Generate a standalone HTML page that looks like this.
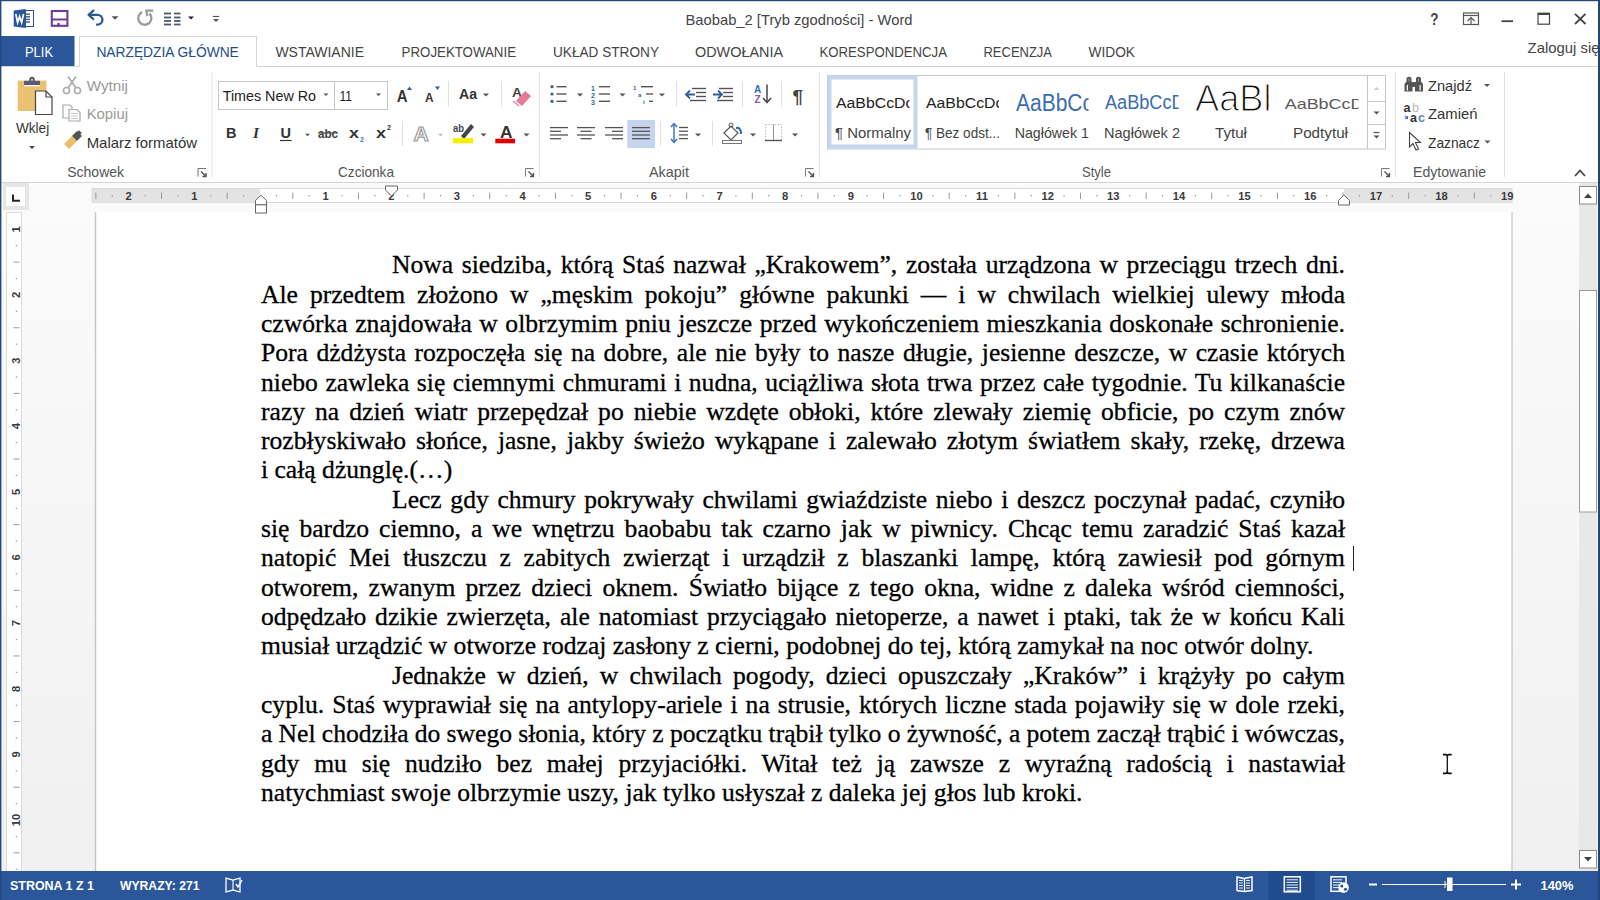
<!DOCTYPE html>
<html><head><meta charset="utf-8"><title>Word</title><style>
html,body{margin:0;padding:0;}
body{width:1600px;height:900px;overflow:hidden;position:relative;background:#fff;font-family:"Liberation Sans",sans-serif;}
.ln{position:absolute;height:0;font-family:"Liberation Serif",serif;font-size:25.6px;color:#000;-webkit-text-stroke:0.3px #000;white-space:nowrap;line-height:0;}

</style></head>
<body>
<svg width="1600" height="900" style="position:absolute;left:0;top:0" font-family='"Liberation Sans", sans-serif'><rect x="0" y="0" width="1600" height="900" fill="#ffffff" />
<defs><linearGradient id="docbg" x1="0" y1="0" x2="0" y2="1"><stop offset="0" stop-color="#fbfbfb"/><stop offset="1" stop-color="#f0f0f0"/></linearGradient></defs>
<rect x="0" y="183" width="1600" height="688" fill="url(#docbg)" />
<rect x="95" y="212" width="1417" height="659" fill="#ffffff" />
<line x1="95.5" y1="212" x2="95.5" y2="871" stroke="#c6c6c6" stroke-width="1.5" />
<line x1="1512" y1="212" x2="1512" y2="871" stroke="#c6c6c6" stroke-width="1.3" />
<text x="685.5" y="24.8" font-size="15" fill="#444" font-weight="normal" textLength="227.0" lengthAdjust="spacingAndGlyphs" >Baobab_2 [Tryb zgodności] - Word</text>
<rect x="25.5" y="10.5" width="8" height="16" fill="#ffffff" stroke="#2e4d86" stroke-width="1"/>
<line x1="25.5" y1="14.2" x2="30" y2="14.2" stroke="#3b5a90" stroke-width="1.4" />
<line x1="25.5" y1="16.8" x2="30" y2="16.8" stroke="#3b5a90" stroke-width="1.4" />
<line x1="25.5" y1="19.4" x2="30" y2="19.4" stroke="#3b5a90" stroke-width="1.4" />
<line x1="25.5" y1="22" x2="30" y2="22" stroke="#3b5a90" stroke-width="1.4" />
<path d="M13.7,10.5 L25.7,9 L25.7,28 L13.7,26.5 Z" fill="#2b579a" stroke="none" stroke-width="1" />
<path d="M15.8,14 L17.6,22.5 L19.6,16.5 L21.6,22.5 L23.6,14" fill="none" stroke="#ffffff" stroke-width="1.7" stroke-linejoin="miter"/>
<rect x="51.8" y="11" width="15.6" height="14.8" fill="none" stroke="#6e3b9e" stroke-width="2.1"/>
<line x1="52" y1="19.5" x2="67" y2="19.5" stroke="#6e3b9e" stroke-width="2" />
<rect x="57.3" y="23" width="2.4" height="3.5" fill="#6e3b9e" />
<path d="M89,14.8 L97.5,14.8 A4.95,4.95 0 0 1 97.5,24.7 L97,24.7" fill="none" stroke="#2b5a92" stroke-width="2.3" stroke-linecap="round"/>
<path d="M93.3,10.6 L88.6,14.8 L93.3,19" fill="none" stroke="#2b5a92" stroke-width="2.3" stroke-linecap="round" stroke-linejoin="round"/>
<path d="M111.5,16.25 L118.5,16.25 L115,19.75 Z" fill="#555" stroke="none" stroke-width="1" />
<path d="M142.2,12.1 A6.6,6.6 0 1 0 149.3,13.3" fill="none" stroke="#9a9a9a" stroke-width="2.3" />
<path d="M153.2,10.6 L146.3,10.6 L147.3,16.2" fill="none" stroke="#9a9a9a" stroke-width="2.2" />
<line x1="164" y1="13.5" x2="171" y2="13.5" stroke="#4a5a70" stroke-width="1.8" />
<line x1="174" y1="13.5" x2="180.5" y2="13.5" stroke="#4a5a70" stroke-width="1.8" />
<line x1="164" y1="17.5" x2="171" y2="17.5" stroke="#4a5a70" stroke-width="1.8" />
<line x1="174" y1="17.5" x2="180.5" y2="17.5" stroke="#4a5a70" stroke-width="1.8" />
<line x1="164" y1="21" x2="171" y2="21" stroke="#4a5a70" stroke-width="1.8" />
<line x1="174" y1="21" x2="180.5" y2="21" stroke="#4a5a70" stroke-width="1.8" />
<line x1="164" y1="24.5" x2="171" y2="24.5" stroke="#4a5a70" stroke-width="1.8" />
<line x1="174" y1="24.5" x2="180.5" y2="24.5" stroke="#4a5a70" stroke-width="1.8" />
<path d="M188.0,16.5 L194.0,16.5 L191,19.5 Z" fill="#222" stroke="none" stroke-width="1" />
<line x1="213" y1="16.5" x2="219" y2="16.5" stroke="#555" stroke-width="1.2" />
<path d="M213.0,19.0 L219.0,19.0 L216,22.0 Z" fill="#555" stroke="none" stroke-width="1" />
<text x="1430.3" y="24.6" font-size="16.5" fill="#444" font-weight="bold" textLength="8.2" lengthAdjust="spacingAndGlyphs" >?</text>
<rect x="1463.5" y="13" width="15" height="11.5" fill="none" stroke="#555" stroke-width="1.2"/>
<line x1="1463.5" y1="15.5" x2="1478.5" y2="15.5" stroke="#555" stroke-width="1.2" />
<path d="M1467.5,21 L1471,17.5 L1474.5,21" fill="none" stroke="#555" stroke-width="1.2" />
<line x1="1471" y1="17.5" x2="1471" y2="24.5" stroke="#555" stroke-width="1.2" />
<line x1="1501.5" y1="21.2" x2="1513" y2="21.2" stroke="#444" stroke-width="1.8" />
<rect x="1538" y="13.2" width="11.5" height="11" fill="none" stroke="#444" stroke-width="1.2"/>
<line x1="1538" y1="14" x2="1549.5" y2="14" stroke="#444" stroke-width="2" />
<line x1="1575" y1="13.8" x2="1585.5" y2="24" stroke="#444" stroke-width="1.8" />
<line x1="1585.5" y1="13.8" x2="1575" y2="24" stroke="#444" stroke-width="1.8" />
<rect x="0" y="36" width="74.5" height="30.5" fill="#2b579a" />
<text x="25" y="57.1" font-size="15" fill="#ffffff" font-weight="normal" textLength="28.0" lengthAdjust="spacingAndGlyphs" >PLIK</text>
<path d="M79.5,66.5 L79.5,36.5 L256.5,36.5 L256.5,66.5" fill="none" stroke="#d4d4d4" stroke-width="1" />
<text x="96.4" y="57.1" font-size="15" fill="#234d8c" font-weight="normal" textLength="142.4" lengthAdjust="spacingAndGlyphs" >NARZĘDZIA GŁÓWNE</text>
<text x="275.4" y="57.1" font-size="15" fill="#444" font-weight="normal" textLength="88.6" lengthAdjust="spacingAndGlyphs" >WSTAWIANIE</text>
<text x="401.6" y="57.1" font-size="15" fill="#444" font-weight="normal" textLength="114.4" lengthAdjust="spacingAndGlyphs" >PROJEKTOWANIE</text>
<text x="553" y="57.1" font-size="15" fill="#444" font-weight="normal" textLength="106.0" lengthAdjust="spacingAndGlyphs" >UKŁAD STRONY</text>
<text x="695" y="57.1" font-size="15" fill="#444" font-weight="normal" textLength="88.0" lengthAdjust="spacingAndGlyphs" >ODWOŁANIA</text>
<text x="819.5" y="57.1" font-size="15" fill="#444" font-weight="normal" textLength="127.5" lengthAdjust="spacingAndGlyphs" >KORESPONDENCJA</text>
<text x="983.5" y="57.1" font-size="15" fill="#444" font-weight="normal" textLength="68.5" lengthAdjust="spacingAndGlyphs" >RECENZJA</text>
<text x="1088.5" y="57.1" font-size="15" fill="#444" font-weight="normal" textLength="46.5" lengthAdjust="spacingAndGlyphs" >WIDOK</text>
<text x="1527.6" y="53" font-size="15" fill="#444" font-weight="normal" textLength="71.9" lengthAdjust="spacingAndGlyphs" >Zaloguj się</text>
<line x1="0" y1="66.5" x2="79.5" y2="66.5" stroke="#d4d4d4" stroke-width="1" />
<line x1="256.5" y1="66.5" x2="1600" y2="66.5" stroke="#d4d4d4" stroke-width="1" />
<line x1="0" y1="182.5" x2="1600" y2="182.5" stroke="#d4d4d4" stroke-width="1" />
<line x1="212" y1="72" x2="212" y2="177" stroke="#e1e1e1" stroke-width="1" />
<line x1="539.5" y1="72" x2="539.5" y2="177" stroke="#e1e1e1" stroke-width="1" />
<line x1="819.5" y1="72" x2="819.5" y2="177" stroke="#e1e1e1" stroke-width="1" />
<line x1="1395.5" y1="72" x2="1395.5" y2="177" stroke="#e1e1e1" stroke-width="1" />
<line x1="1504.5" y1="72" x2="1504.5" y2="177" stroke="#e1e1e1" stroke-width="1" />
<text x="67.3" y="176.7" font-size="15" fill="#555" font-weight="normal" textLength="56.7" lengthAdjust="spacingAndGlyphs" >Schowek</text>
<text x="338" y="176.7" font-size="15" fill="#555" font-weight="normal" textLength="56.0" lengthAdjust="spacingAndGlyphs" >Czcionka</text>
<text x="649" y="176.7" font-size="15" fill="#555" font-weight="normal" textLength="40.0" lengthAdjust="spacingAndGlyphs" >Akapit</text>
<text x="1082" y="176.7" font-size="15" fill="#555" font-weight="normal" textLength="29.0" lengthAdjust="spacingAndGlyphs" >Style</text>
<text x="1413" y="177" font-size="15" fill="#555" font-weight="normal" textLength="73.0" lengthAdjust="spacingAndGlyphs" >Edytowanie</text>
<path d="M198,176.5 L198,168.5 L206,168.5" fill="none" stroke="#777" stroke-width="1" />
<path d="M201,171.5 L206,176.5 M206,173.0 L206,176.5 L202.5,176.5" fill="none" stroke="#555" stroke-width="1.4" />
<path d="M525.5,176.5 L525.5,168.5 L533.5,168.5" fill="none" stroke="#777" stroke-width="1" />
<path d="M528.5,171.5 L533.5,176.5 M533.5,173.0 L533.5,176.5 L530.0,176.5" fill="none" stroke="#555" stroke-width="1.4" />
<path d="M805.5,176.5 L805.5,168.5 L813.5,168.5" fill="none" stroke="#777" stroke-width="1" />
<path d="M808.5,171.5 L813.5,176.5 M813.5,173.0 L813.5,176.5 L810.0,176.5" fill="none" stroke="#555" stroke-width="1.4" />
<path d="M1381.5,176.5 L1381.5,168.5 L1389.5,168.5" fill="none" stroke="#777" stroke-width="1" />
<path d="M1384.5,171.5 L1389.5,176.5 M1389.5,173.0 L1389.5,176.5 L1386.0,176.5" fill="none" stroke="#555" stroke-width="1.4" />
<path d="M1575,176 L1580,170.5 L1585,176" fill="none" stroke="#444" stroke-width="1.8" />
<rect x="17.7" y="80.6" width="28.7" height="30.4" fill="#eac173" />
<rect x="24" y="80.8" width="16" height="4.2" fill="#5e5a78" />
<rect x="24" y="85" width="16" height="1.4" fill="#fbf3e0" />
<circle cx="32" cy="79.6" r="2.8" fill="#5e5a78"/>
<circle cx="32" cy="79.8" r="1.1" fill="#eac173"/>
<path d="M35.5,91 L46,91 L52,97 L52,114.5 L35.5,114.5 Z" fill="#ffffff" stroke="#444" stroke-width="1.2" />
<path d="M46,91 L46,97 L52,97" fill="none" stroke="#444" stroke-width="1.2" />
<text x="16" y="133.2" font-size="15" fill="#333" font-weight="normal" textLength="33.2" lengthAdjust="spacingAndGlyphs" >Wklej</text>
<path d="M29.0,146.0 L35.0,146.0 L32,149.0 Z" fill="#444" stroke="none" stroke-width="1" />
<circle cx="66.5" cy="90.5" r="3" fill="none" stroke="#aaa" stroke-width="1.6"/>
<circle cx="77.5" cy="90.5" r="3" fill="none" stroke="#aaa" stroke-width="1.6"/>
<path d="M68,88 L76,76.5 M76,88 L68,76.5" fill="none" stroke="#aaa" stroke-width="1.6" />
<text x="86.7" y="90.7" font-size="15" fill="#9a9a9a" font-weight="normal" textLength="41.3" lengthAdjust="spacingAndGlyphs" >Wytnij</text>
<path d="M63,105 L70,105 L72,107 L72,118 L63,118 Z" fill="#fff" stroke="#aaa" stroke-width="1.2" />
<path d="M69,109.5 L77,109.5 L80,112.5 L80,121 L69,121 Z" fill="#fff" stroke="#aaa" stroke-width="1.2" />
<line x1="71" y1="113.5" x2="78" y2="113.5" stroke="#bbb" stroke-width="0.8" />
<line x1="71" y1="116" x2="78" y2="116" stroke="#bbb" stroke-width="0.8" />
<line x1="71" y1="118.5" x2="78" y2="118.5" stroke="#bbb" stroke-width="0.8" />
<text x="86.7" y="119.3" font-size="15" fill="#9a9a9a" font-weight="normal" textLength="41.3" lengthAdjust="spacingAndGlyphs" >Kopiuj</text>
<path d="M64,144 L72,136 L77,141 L69,149 Z" fill="#e9bf6c" stroke="none" stroke-width="1" />
<path d="M72,136 L77,131 L82,136 L77,141 Z" fill="#555" stroke="none" stroke-width="1" />
<rect x="77" y="131" width="4" height="4" fill="#555" transform="rotate(45 79 133)"/>
<text x="86.7" y="148" font-size="15" fill="#333" font-weight="normal" textLength="110.3" lengthAdjust="spacingAndGlyphs" >Malarz formatów</text>
<rect x="218.5" y="81.5" width="116" height="28" fill="#fff" stroke="#c6c6c6" stroke-width="1"/>
<rect x="334.5" y="81.5" width="53" height="28" fill="#fff" stroke="#c6c6c6" stroke-width="1"/>
<text x="222.7" y="101" font-size="15" fill="#222" font-weight="normal" textLength="93.3" lengthAdjust="spacingAndGlyphs" >Times New Ro</text>
<path d="M323.5,93.55 L328.5,93.55 L326,96.05 Z" fill="#555" stroke="none" stroke-width="1" />
<text x="339.5" y="101" font-size="15" fill="#222" font-weight="normal" textLength="12.5" lengthAdjust="spacingAndGlyphs" >11</text>
<path d="M376.0,93.55 L381.0,93.55 L378.5,96.05 Z" fill="#555" stroke="none" stroke-width="1" />
<text x="396.7" y="102" font-size="16" fill="#333" font-weight="bold" textLength="10.8" lengthAdjust="spacingAndGlyphs" >A</text>
<path d="M407,90 L409.5,86.5 L412,90 Z" fill="#2f5f9e" stroke="none" stroke-width="1" />
<text x="425" y="102" font-size="12.5" fill="#333" font-weight="bold" textLength="8.5" lengthAdjust="spacingAndGlyphs" >A</text>
<path d="M435,86.5 L440,86.5 L437.5,90 Z" fill="#2f5f9e" stroke="none" stroke-width="1" />
<line x1="448.5" y1="81" x2="448.5" y2="107" stroke="#e1e1e1" stroke-width="1" />
<text x="459" y="99.3" font-size="15" fill="#333" font-weight="bold" textLength="18.0" lengthAdjust="spacingAndGlyphs" >Aa</text>
<path d="M483.0,93.5 L489.0,93.5 L486,96.5 Z" fill="#555" stroke="none" stroke-width="1" />
<line x1="501.5" y1="81" x2="501.5" y2="107" stroke="#e1e1e1" stroke-width="1" />
<text x="512" y="97" font-size="12" fill="#444" font-weight="bold" textLength="10.0" lengthAdjust="spacingAndGlyphs" >A</text>
<path d="M516,101 L525,91 L531,96 L522,106 Z" fill="#e57a97" stroke="none" stroke-width="1" />
<path d="M513,101 L519,106" fill="none" stroke="#e57a97" stroke-width="1.2" />
<text x="226" y="138" font-size="15" fill="#333" font-weight="bold" textLength="10.5" lengthAdjust="spacingAndGlyphs" >B</text>
<text x="253" y="138.3" font-size="15.5" fill="#333" font-style="italic" font-weight="bold" font-family="Liberation Serif">I</text>
<text x="280.5" y="137.5" font-size="14" fill="#333" font-weight="bold" textLength="10.5" lengthAdjust="spacingAndGlyphs" >U</text>
<line x1="280" y1="140.5" x2="291.5" y2="140.5" stroke="#333" stroke-width="1.2" />
<path d="M305.0,133.75 L310.0,133.75 L307.5,136.25 Z" fill="#555" stroke="none" stroke-width="1" />
<text x="318" y="138" font-size="13" fill="#444" font-weight="bold" textLength="20.0" lengthAdjust="spacingAndGlyphs" >abc</text>
<line x1="318" y1="133" x2="338" y2="133" stroke="#444" stroke-width="1" />
<text x="349" y="138" font-size="15" fill="#333" font-weight="bold" textLength="10.0" lengthAdjust="spacingAndGlyphs" >x</text>
<text x="360" y="141.5" font-size="7" fill="#3b78c4" font-weight="bold">2</text>
<text x="376" y="138" font-size="15" fill="#333" font-weight="bold" textLength="10.0" lengthAdjust="spacingAndGlyphs" >x</text>
<text x="387" y="130" font-size="7" fill="#333" font-weight="bold">2</text>
<line x1="402.5" y1="121" x2="402.5" y2="146" stroke="#e1e1e1" stroke-width="1" />
<text x="413.5" y="141" font-size="21" fill="#fff" stroke="#999" stroke-width="1.2" font-weight="bold">A</text>
<path d="M438.0,133.75 L443.0,133.75 L440.5,136.25 Z" fill="#bbb" stroke="none" stroke-width="1" />
<text x="453" y="132" font-size="11" fill="#444" font-weight="bold" textLength="11.0" lengthAdjust="spacingAndGlyphs" >ab</text>
<path d="M461,136 L471,124 L474,127 L464,139 Z" fill="#444" stroke="none" stroke-width="1" />
<rect x="453" y="138" width="20" height="5.3" fill="#f5f000" />
<path d="M480.5,133.5 L486.5,133.5 L483.5,136.5 Z" fill="#555" stroke="none" stroke-width="1" />
<text x="500" y="138" font-size="17" fill="#333" font-weight="bold" textLength="12.5" lengthAdjust="spacingAndGlyphs" >A</text>
<rect x="495.3" y="138.7" width="19.7" height="4.6" fill="#e00000" />
<path d="M523.5,133.5 L529.5,133.5 L526.5,136.5 Z" fill="#555" stroke="none" stroke-width="1" />
<circle cx="552" cy="86.7" r="1.6" fill="#2f5f9e"/>
<line x1="556.5" y1="86.7" x2="566.5" y2="86.7" stroke="#555" stroke-width="1.4" />
<circle cx="552" cy="94.0" r="1.6" fill="#2f5f9e"/>
<line x1="556.5" y1="94.0" x2="566.5" y2="94.0" stroke="#555" stroke-width="1.4" />
<circle cx="552" cy="101.3" r="1.6" fill="#2f5f9e"/>
<line x1="556.5" y1="101.3" x2="566.5" y2="101.3" stroke="#555" stroke-width="1.4" />
<path d="M577.0,93.5 L583.0,93.5 L580,96.5 Z" fill="#555" stroke="none" stroke-width="1" />
<text x="591" y="90.5" font-size="7" fill="#2f5f9e" font-weight="bold">1</text>
<line x1="599" y1="86.7" x2="610" y2="86.7" stroke="#555" stroke-width="1.4" />
<text x="591" y="97.8" font-size="7" fill="#2f5f9e" font-weight="bold">2</text>
<line x1="599" y1="94.0" x2="610" y2="94.0" stroke="#555" stroke-width="1.4" />
<text x="591" y="105.1" font-size="7" fill="#2f5f9e" font-weight="bold">3</text>
<line x1="599" y1="101.3" x2="610" y2="101.3" stroke="#555" stroke-width="1.4" />
<path d="M619.5,93.5 L625.5,93.5 L622.5,96.5 Z" fill="#555" stroke="none" stroke-width="1" />
<text x="633" y="90" font-size="6" fill="#2f5f9e" font-weight="bold">1</text>
<line x1="641" y1="86.7" x2="653" y2="86.7" stroke="#555" stroke-width="1.4" />
<text x="638" y="97" font-size="6" fill="#2f5f9e" font-weight="bold">a</text>
<line x1="646" y1="94" x2="653" y2="94" stroke="#555" stroke-width="1.4" />
<text x="643" y="104" font-size="6" fill="#2f5f9e" font-weight="bold">i</text>
<line x1="649" y1="101.3" x2="653" y2="101.3" stroke="#555" stroke-width="1.4" />
<path d="M659.0,93.5 L665.0,93.5 L662,96.5 Z" fill="#555" stroke="none" stroke-width="1" />
<line x1="676.5" y1="81" x2="676.5" y2="107" stroke="#e1e1e1" stroke-width="1" />
<line x1="692" y1="88.5" x2="706" y2="88.5" stroke="#555" stroke-width="1.4" />
<line x1="696" y1="92.5" x2="706" y2="92.5" stroke="#555" stroke-width="1.4" />
<line x1="696" y1="96.5" x2="706" y2="96.5" stroke="#555" stroke-width="1.4" />
<line x1="690" y1="100.5" x2="706" y2="100.5" stroke="#555" stroke-width="1.4" />
<path d="M695,94.5 L686,94.5 M690,90.5 L686,94.5 L690,98.5" fill="none" stroke="#2f5f9e" stroke-width="1.8" />
<line x1="719" y1="88.5" x2="733" y2="88.5" stroke="#555" stroke-width="1.4" />
<line x1="723" y1="92.5" x2="733" y2="92.5" stroke="#555" stroke-width="1.4" />
<line x1="723" y1="96.5" x2="733" y2="96.5" stroke="#555" stroke-width="1.4" />
<line x1="717" y1="100.5" x2="733" y2="100.5" stroke="#555" stroke-width="1.4" />
<path d="M713,94.5 L722,94.5 M718,90.5 L722,94.5 L718,98.5" fill="none" stroke="#2f5f9e" stroke-width="1.8" />
<line x1="742.5" y1="81" x2="742.5" y2="107" stroke="#e1e1e1" stroke-width="1" />
<text x="754" y="93" font-size="10" fill="#2f6fba" font-weight="bold">A</text>
<text x="754.5" y="103" font-size="10" fill="#8a5bb0" font-weight="bold">Z</text>
<line x1="767" y1="84.5" x2="767" y2="102" stroke="#444" stroke-width="1.5" />
<path d="M763,98 L767,102.5 L771,98" fill="none" stroke="#444" stroke-width="1.5" />
<line x1="781.5" y1="81" x2="781.5" y2="107" stroke="#e1e1e1" stroke-width="1" />
<text x="792.5" y="102.5" font-size="19" fill="#444" font-weight="bold">¶</text>
<rect x="627.3" y="120" width="27.7" height="28" fill="#c5d5ee" />
<line x1="550" y1="127.6" x2="568" y2="127.6" stroke="#555" stroke-width="1.3" />
<line x1="550" y1="131.29999999999998" x2="561" y2="131.29999999999998" stroke="#555" stroke-width="1.3" />
<line x1="550" y1="135.0" x2="568" y2="135.0" stroke="#555" stroke-width="1.3" />
<line x1="550" y1="138.7" x2="561" y2="138.7" stroke="#555" stroke-width="1.3" />
<line x1="577.0" y1="127.6" x2="595.0" y2="127.6" stroke="#555" stroke-width="1.3" />
<line x1="580.5" y1="131.29999999999998" x2="591.5" y2="131.29999999999998" stroke="#555" stroke-width="1.3" />
<line x1="577.0" y1="135.0" x2="595.0" y2="135.0" stroke="#555" stroke-width="1.3" />
<line x1="580.5" y1="138.7" x2="591.5" y2="138.7" stroke="#555" stroke-width="1.3" />
<line x1="605" y1="127.6" x2="623" y2="127.6" stroke="#555" stroke-width="1.3" />
<line x1="612" y1="131.29999999999998" x2="623" y2="131.29999999999998" stroke="#555" stroke-width="1.3" />
<line x1="605" y1="135.0" x2="623" y2="135.0" stroke="#555" stroke-width="1.3" />
<line x1="612" y1="138.7" x2="623" y2="138.7" stroke="#555" stroke-width="1.3" />
<line x1="632" y1="127.6" x2="650" y2="127.6" stroke="#555" stroke-width="1.3" />
<line x1="632" y1="131.29999999999998" x2="650" y2="131.29999999999998" stroke="#555" stroke-width="1.3" />
<line x1="632" y1="135.0" x2="650" y2="135.0" stroke="#555" stroke-width="1.3" />
<line x1="632" y1="138.7" x2="650" y2="138.7" stroke="#555" stroke-width="1.3" />
<line x1="660.5" y1="121" x2="660.5" y2="146" stroke="#e1e1e1" stroke-width="1" />
<line x1="674" y1="124" x2="674" y2="142" stroke="#2f6fba" stroke-width="1.4" />
<path d="M671,127 L674,123.5 L677,127 M671,139 L674,142.5 L677,139" fill="none" stroke="#2f6fba" stroke-width="1.4" />
<line x1="679" y1="127.5" x2="688" y2="127.5" stroke="#555" stroke-width="1.3" />
<line x1="679" y1="131.2" x2="688" y2="131.2" stroke="#555" stroke-width="1.3" />
<line x1="679" y1="134.9" x2="688" y2="134.9" stroke="#555" stroke-width="1.3" />
<line x1="679" y1="138.6" x2="688" y2="138.6" stroke="#555" stroke-width="1.3" />
<path d="M695.0,133.5 L701.0,133.5 L698,136.5 Z" fill="#555" stroke="none" stroke-width="1" />
<line x1="712.5" y1="121" x2="712.5" y2="146" stroke="#e1e1e1" stroke-width="1" />
<path d="M724,133 L731,126 L738,133 L731,140 Z" fill="#fff" stroke="#555" stroke-width="1.2" />
<circle cx="731" cy="125" r="2" fill="none" stroke="#555" stroke-width="1"/>
<path d="M736,128 Q741,127 741,134" fill="none" stroke="#2f6fba" stroke-width="2" />
<rect x="722.5" y="140.5" width="19" height="3" fill="#fff" stroke="#777" stroke-width="1"/>
<path d="M750.0,133.5 L756.0,133.5 L753,136.5 Z" fill="#555" stroke="none" stroke-width="1" />
<rect x="765.5" y="124.5" width="16" height="16" fill="none" stroke="#aaa" stroke-width="0.8" stroke-dasharray="1.5,1.5"/>
<line x1="773.5" y1="124.5" x2="773.5" y2="140.5" stroke="#999" stroke-width="1" />
<line x1="765" y1="140.5" x2="782" y2="140.5" stroke="#555" stroke-width="1.4" />
<path d="M792.0,133.5 L798.0,133.5 L795,136.5 Z" fill="#555" stroke="none" stroke-width="1" />
<rect x="827.5" y="75.5" width="558" height="73.5" fill="#fff" stroke="#c6c6c6" stroke-width="1"/>
<rect x="829.5" y="77.5" width="86" height="69" fill="none" stroke="#c5d5ee" stroke-width="4"/>
<line x1="1367.5" y1="75.5" x2="1367.5" y2="149" stroke="#c6c6c6" stroke-width="1" />
<line x1="1367.5" y1="101.5" x2="1385.5" y2="101.5" stroke="#c6c6c6" stroke-width="1" />
<line x1="1367.5" y1="124.5" x2="1385.5" y2="124.5" stroke="#c6c6c6" stroke-width="1" />
<path d="M1373.5,90 L1376.5,87 L1379.5,90 Z" fill="#ccc" stroke="none" stroke-width="1" />
<path d="M1373.5,111.5 L1379.5,111.5 L1376.5,114.5 Z" fill="#555" stroke="none" stroke-width="1" />
<line x1="1373.5" y1="132.5" x2="1379.5" y2="132.5" stroke="#555" stroke-width="1.2" />
<path d="M1373.5,135.5 L1379.5,135.5 L1376.5,138.5 Z" fill="#555" stroke="none" stroke-width="1" />
<clipPath id="clp1"><rect x="833" y="90.95" width="76.5" height="23.25"/></clipPath>
<text x="836" y="108" font-size="15.5" fill="#222" textLength="77.4" lengthAdjust="spacingAndGlyphs" clip-path="url(#clp1)" >AaBbCcDc</text>
<text x="835" y="138" font-size="15" fill="#444" font-weight="normal" textLength="76.0" lengthAdjust="spacingAndGlyphs" >¶ Normalny</text>
<clipPath id="clp2"><rect x="923" y="90.95" width="76" height="23.25"/></clipPath>
<text x="926" y="108" font-size="15.5" fill="#222" textLength="77.4" lengthAdjust="spacingAndGlyphs" clip-path="url(#clp2)" >AaBbCcDc</text>
<text x="925" y="138" font-size="15" fill="#444" font-weight="normal" textLength="75.0" lengthAdjust="spacingAndGlyphs" >¶ Bez odst...</text>
<clipPath id="clp3"><rect x="1013" y="85.4" width="75.5" height="34.5"/></clipPath>
<text x="1016" y="110.7" font-size="23" fill="#3a6db0" textLength="77.0" lengthAdjust="spacingAndGlyphs" clip-path="url(#clp3)" >AaBbCc</text>
<text x="1014.7" y="138" font-size="15" fill="#444" font-weight="normal" textLength="74.3" lengthAdjust="spacingAndGlyphs" >Nagłówek 1</text>
<clipPath id="clp4"><rect x="1102" y="86.7" width="76.5" height="30.0"/></clipPath>
<text x="1105" y="108.7" font-size="20" fill="#3a6db0" textLength="79.6" lengthAdjust="spacingAndGlyphs" clip-path="url(#clp4)" >AaBbCcD</text>
<text x="1104" y="138" font-size="15" fill="#444" font-weight="normal" textLength="76.0" lengthAdjust="spacingAndGlyphs" >Nagłówek 2</text>
<clipPath id="clp5"><rect x="1192" y="71.1" width="76.5" height="54.0"/></clipPath>
<text x="1195" y="110.7" font-size="36" fill="#111" textLength="88.7" lengthAdjust="spacingAndGlyphs" clip-path="url(#clp5)" stroke="#fff" stroke-width="1.2">AaBb</text>
<text x="1215" y="138" font-size="15" fill="#444" font-weight="normal" textLength="32.0" lengthAdjust="spacingAndGlyphs" >Tytuł</text>
<clipPath id="clp6"><rect x="1281.7" y="92.2" width="76.79999999999995" height="22.5"/></clipPath>
<text x="1284.7" y="108.7" font-size="15" fill="#5a5a5a" textLength="78.8" lengthAdjust="spacingAndGlyphs" clip-path="url(#clp6)" >AaBbCcD</text>
<text x="1293" y="138" font-size="15" fill="#444" font-weight="normal" textLength="55.0" lengthAdjust="spacingAndGlyphs" >Podtytuł</text>
<path d="M1404.5,91.5 L1404.5,84 L1406.5,81.5 L1406.5,78 Q1409,75.5 1411.5,78 L1411.5,82 L1416,82 L1416,78 Q1418.5,75.5 1421,78 L1421,81.5 L1423,84 L1423,91.5 L1415,91.5 L1415,87 L1412.5,87 L1412.5,91.5 Z" fill="#555" stroke="none" stroke-width="1" />
<rect x="1406.8" y="85" width="1.2" height="5.5" fill="#fff" />
<rect x="1419.5" y="85" width="1.2" height="5.5" fill="#fff" />
<rect x="1408.5" y="78.5" width="1" height="3" fill="#999" />
<rect x="1418" y="78.5" width="1" height="3" fill="#999" />
<text x="1428" y="90.7" font-size="15" fill="#333" font-weight="normal" textLength="44.0" lengthAdjust="spacingAndGlyphs" >Znajdź</text>
<path d="M1484.0,84.0 L1490.0,84.0 L1487,87.0 Z" fill="#555" stroke="none" stroke-width="1" />
<text x="1403.5" y="112.3" font-size="12.5" fill="#333" font-weight="bold">a</text>
<text x="1412" y="112.3" font-size="12.5" fill="#b5b5b5">b</text>
<text x="1410" y="121.5" font-size="12.5" fill="#333" font-weight="bold">a</text>
<text x="1418" y="121.5" font-size="12.5" fill="#5a86b8" font-weight="bold">c</text>
<path d="M1405,116 L1407.5,118.5 M1405,118.5 L1407.5,118.5 L1407.5,116" fill="none" stroke="#3b78c4" stroke-width="1.2" />
<text x="1428" y="119.2" font-size="15" fill="#333" font-weight="normal" textLength="49.5" lengthAdjust="spacingAndGlyphs" >Zamień</text>
<path d="M1409.5,132.5 L1409.5,147 L1413,143.5 L1416,150 L1418.5,149 L1415.5,142.5 L1420.5,142.5 Z" fill="#fff" stroke="#444" stroke-width="1.1" />
<text x="1428" y="147.7" font-size="15" fill="#333" font-weight="normal" textLength="52.0" lengthAdjust="spacingAndGlyphs" >Zaznacz</text>
<path d="M1484.5,140.5 L1490.5,140.5 L1487.5,143.5 Z" fill="#555" stroke="none" stroke-width="1" />
<rect x="3" y="183" width="26" height="27" fill="#e6e6e6" />
<rect x="6" y="187" width="19" height="19" fill="#ffffff" />
<path d="M13,194.5 L13,200.8 L20,200.8" fill="none" stroke="#222" stroke-width="1.9" />
<rect x="92" y="188.5" width="1420" height="14" fill="#ffffff" stroke="#dadada" stroke-width="1"/>
<rect x="92" y="189" width="168" height="13.5" fill="#e3e3e3" />
<rect x="1344" y="189" width="168" height="13.5" fill="#e3e3e3" />
<line x1="95.9" y1="192.5" x2="95.9" y2="199" stroke="#999" stroke-width="1" />
<rect x="111.71000000000001" y="195" width="1.2" height="1.4" fill="#999" />
<text x="128.7" y="200.3" font-size="11.2" fill="#3a3a3a" font-weight="bold" text-anchor="middle">2</text>
<rect x="144.53" y="195" width="1.2" height="1.4" fill="#999" />
<line x1="161.54" y1="192.5" x2="161.54" y2="199" stroke="#999" stroke-width="1" />
<rect x="177.35" y="195" width="1.2" height="1.4" fill="#999" />
<text x="194.4" y="200.3" font-size="11.2" fill="#3a3a3a" font-weight="bold" text-anchor="middle">1</text>
<rect x="210.17" y="195" width="1.2" height="1.4" fill="#999" />
<line x1="227.18" y1="192.5" x2="227.18" y2="199" stroke="#999" stroke-width="1" />
<rect x="242.99" y="195" width="1.2" height="1.4" fill="#999" />
<rect x="275.81" y="195" width="1.2" height="1.4" fill="#999" />
<line x1="292.82" y1="192.5" x2="292.82" y2="199" stroke="#999" stroke-width="1" />
<rect x="308.63" y="195" width="1.2" height="1.4" fill="#999" />
<text x="325.6" y="200.3" font-size="11.2" fill="#3a3a3a" font-weight="bold" text-anchor="middle">1</text>
<rect x="341.45" y="195" width="1.2" height="1.4" fill="#999" />
<line x1="358.46000000000004" y1="192.5" x2="358.46000000000004" y2="199" stroke="#999" stroke-width="1" />
<rect x="374.27" y="195" width="1.2" height="1.4" fill="#999" />
<text x="391.3" y="200.3" font-size="11.2" fill="#3a3a3a" font-weight="bold" text-anchor="middle">2</text>
<rect x="407.09" y="195" width="1.2" height="1.4" fill="#999" />
<line x1="424.1" y1="192.5" x2="424.1" y2="199" stroke="#999" stroke-width="1" />
<rect x="439.90999999999997" y="195" width="1.2" height="1.4" fill="#999" />
<text x="456.9" y="200.3" font-size="11.2" fill="#3a3a3a" font-weight="bold" text-anchor="middle">3</text>
<rect x="472.73" y="195" width="1.2" height="1.4" fill="#999" />
<line x1="489.74" y1="192.5" x2="489.74" y2="199" stroke="#999" stroke-width="1" />
<rect x="505.54999999999995" y="195" width="1.2" height="1.4" fill="#999" />
<text x="522.6" y="200.3" font-size="11.2" fill="#3a3a3a" font-weight="bold" text-anchor="middle">4</text>
<rect x="538.37" y="195" width="1.2" height="1.4" fill="#999" />
<line x1="555.38" y1="192.5" x2="555.38" y2="199" stroke="#999" stroke-width="1" />
<rect x="571.1899999999999" y="195" width="1.2" height="1.4" fill="#999" />
<text x="588.2" y="200.3" font-size="11.2" fill="#3a3a3a" font-weight="bold" text-anchor="middle">5</text>
<rect x="604.01" y="195" width="1.2" height="1.4" fill="#999" />
<line x1="621.02" y1="192.5" x2="621.02" y2="199" stroke="#999" stroke-width="1" />
<rect x="636.83" y="195" width="1.2" height="1.4" fill="#999" />
<text x="653.8" y="200.3" font-size="11.2" fill="#3a3a3a" font-weight="bold" text-anchor="middle">6</text>
<rect x="669.65" y="195" width="1.2" height="1.4" fill="#999" />
<line x1="686.6600000000001" y1="192.5" x2="686.6600000000001" y2="199" stroke="#999" stroke-width="1" />
<rect x="702.4699999999999" y="195" width="1.2" height="1.4" fill="#999" />
<text x="719.5" y="200.3" font-size="11.2" fill="#3a3a3a" font-weight="bold" text-anchor="middle">7</text>
<rect x="735.29" y="195" width="1.2" height="1.4" fill="#999" />
<line x1="752.3" y1="192.5" x2="752.3" y2="199" stroke="#999" stroke-width="1" />
<rect x="768.11" y="195" width="1.2" height="1.4" fill="#999" />
<text x="785.1" y="200.3" font-size="11.2" fill="#3a3a3a" font-weight="bold" text-anchor="middle">8</text>
<rect x="800.93" y="195" width="1.2" height="1.4" fill="#999" />
<line x1="817.94" y1="192.5" x2="817.94" y2="199" stroke="#999" stroke-width="1" />
<rect x="833.75" y="195" width="1.2" height="1.4" fill="#999" />
<text x="850.8" y="200.3" font-size="11.2" fill="#3a3a3a" font-weight="bold" text-anchor="middle">9</text>
<rect x="866.5699999999999" y="195" width="1.2" height="1.4" fill="#999" />
<line x1="883.58" y1="192.5" x2="883.58" y2="199" stroke="#999" stroke-width="1" />
<rect x="899.39" y="195" width="1.2" height="1.4" fill="#999" />
<text x="916.4" y="200.3" font-size="11.2" fill="#3a3a3a" font-weight="bold" text-anchor="middle">10</text>
<rect x="932.21" y="195" width="1.2" height="1.4" fill="#999" />
<line x1="949.22" y1="192.5" x2="949.22" y2="199" stroke="#999" stroke-width="1" />
<rect x="965.03" y="195" width="1.2" height="1.4" fill="#999" />
<text x="982.0" y="200.3" font-size="11.2" fill="#3a3a3a" font-weight="bold" text-anchor="middle">11</text>
<rect x="997.85" y="195" width="1.2" height="1.4" fill="#999" />
<line x1="1014.86" y1="192.5" x2="1014.86" y2="199" stroke="#999" stroke-width="1" />
<rect x="1030.67" y="195" width="1.2" height="1.4" fill="#999" />
<text x="1047.7" y="200.3" font-size="11.2" fill="#3a3a3a" font-weight="bold" text-anchor="middle">12</text>
<rect x="1063.4900000000002" y="195" width="1.2" height="1.4" fill="#999" />
<line x1="1080.5" y1="192.5" x2="1080.5" y2="199" stroke="#999" stroke-width="1" />
<rect x="1096.31" y="195" width="1.2" height="1.4" fill="#999" />
<text x="1113.3" y="200.3" font-size="11.2" fill="#3a3a3a" font-weight="bold" text-anchor="middle">13</text>
<rect x="1129.13" y="195" width="1.2" height="1.4" fill="#999" />
<line x1="1146.1399999999999" y1="192.5" x2="1146.1399999999999" y2="199" stroke="#999" stroke-width="1" />
<rect x="1161.95" y="195" width="1.2" height="1.4" fill="#999" />
<text x="1179.0" y="200.3" font-size="11.2" fill="#3a3a3a" font-weight="bold" text-anchor="middle">14</text>
<rect x="1194.77" y="195" width="1.2" height="1.4" fill="#999" />
<line x1="1211.78" y1="192.5" x2="1211.78" y2="199" stroke="#999" stroke-width="1" />
<rect x="1227.5900000000001" y="195" width="1.2" height="1.4" fill="#999" />
<text x="1244.6" y="200.3" font-size="11.2" fill="#3a3a3a" font-weight="bold" text-anchor="middle">15</text>
<rect x="1260.41" y="195" width="1.2" height="1.4" fill="#999" />
<line x1="1277.42" y1="192.5" x2="1277.42" y2="199" stroke="#999" stroke-width="1" />
<rect x="1293.23" y="195" width="1.2" height="1.4" fill="#999" />
<text x="1310.2" y="200.3" font-size="11.2" fill="#3a3a3a" font-weight="bold" text-anchor="middle">16</text>
<rect x="1326.0500000000002" y="195" width="1.2" height="1.4" fill="#999" />
<line x1="1343.06" y1="192.5" x2="1343.06" y2="199" stroke="#999" stroke-width="1" />
<rect x="1358.8700000000001" y="195" width="1.2" height="1.4" fill="#999" />
<text x="1375.9" y="200.3" font-size="11.2" fill="#3a3a3a" font-weight="bold" text-anchor="middle">17</text>
<rect x="1391.69" y="195" width="1.2" height="1.4" fill="#999" />
<line x1="1408.7" y1="192.5" x2="1408.7" y2="199" stroke="#999" stroke-width="1" />
<rect x="1424.51" y="195" width="1.2" height="1.4" fill="#999" />
<text x="1441.5" y="200.3" font-size="11.2" fill="#3a3a3a" font-weight="bold" text-anchor="middle">18</text>
<rect x="1457.3300000000002" y="195" width="1.2" height="1.4" fill="#999" />
<line x1="1474.34" y1="192.5" x2="1474.34" y2="199" stroke="#999" stroke-width="1" />
<rect x="1490.15" y="195" width="1.2" height="1.4" fill="#999" />
<text x="1507.2" y="200.3" font-size="11.2" fill="#3a3a3a" font-weight="bold" text-anchor="middle">19</text>
<path d="M255.5,204.8 L255.5,200.5 L261,195.2 L266.5,200.5 L266.5,204.8 Z" fill="#fff" stroke="#666" stroke-width="1" />
<rect x="255.5" y="204.8" width="11" height="8.2" fill="#fff" stroke="#666" stroke-width="1"/>
<path d="M385.5,186 L397.5,186 L397.5,190 L391.5,196 L385.5,190 Z" fill="#fff" stroke="#666" stroke-width="1" />
<path d="M1338.5,205 L1338.5,200.5 L1344,195 L1349.5,200.5 L1349.5,205 Z" fill="#fff" stroke="#666" stroke-width="1" />
<rect x="6.5" y="212.5" width="15" height="660" fill="#ffffff" stroke="#dadada" stroke-width="1"/>
<text x="0" y="0" font-size="11.2" fill="#3a3a3a" font-weight="bold" text-anchor="middle" transform="translate(20.2,229.3) rotate(-90)">1</text>
<rect x="15.8" y="245.11000000000004" width="1.4" height="1.2" fill="#999" />
<line x1="13.5" y1="262.12" x2="19.5" y2="262.12" stroke="#999" stroke-width="1" />
<rect x="15.8" y="277.93" width="1.4" height="1.2" fill="#999" />
<text x="0" y="0" font-size="11.2" fill="#3a3a3a" font-weight="bold" text-anchor="middle" transform="translate(20.2,294.9) rotate(-90)">2</text>
<rect x="15.8" y="310.75" width="1.4" height="1.2" fill="#999" />
<line x1="13.5" y1="327.76" x2="19.5" y2="327.76" stroke="#999" stroke-width="1" />
<rect x="15.8" y="343.57" width="1.4" height="1.2" fill="#999" />
<text x="0" y="0" font-size="11.2" fill="#3a3a3a" font-weight="bold" text-anchor="middle" transform="translate(20.2,360.6) rotate(-90)">3</text>
<rect x="15.8" y="376.39" width="1.4" height="1.2" fill="#999" />
<line x1="13.5" y1="393.40000000000003" x2="19.5" y2="393.40000000000003" stroke="#999" stroke-width="1" />
<rect x="15.8" y="409.21000000000004" width="1.4" height="1.2" fill="#999" />
<text x="0" y="0" font-size="11.2" fill="#3a3a3a" font-weight="bold" text-anchor="middle" transform="translate(20.2,426.2) rotate(-90)">4</text>
<rect x="15.8" y="442.03000000000003" width="1.4" height="1.2" fill="#999" />
<line x1="13.5" y1="459.04" x2="19.5" y2="459.04" stroke="#999" stroke-width="1" />
<rect x="15.8" y="474.85" width="1.4" height="1.2" fill="#999" />
<text x="0" y="0" font-size="11.2" fill="#3a3a3a" font-weight="bold" text-anchor="middle" transform="translate(20.2,491.9) rotate(-90)">5</text>
<rect x="15.8" y="507.67" width="1.4" height="1.2" fill="#999" />
<line x1="13.5" y1="524.6800000000001" x2="19.5" y2="524.6800000000001" stroke="#999" stroke-width="1" />
<rect x="15.8" y="540.49" width="1.4" height="1.2" fill="#999" />
<text x="0" y="0" font-size="11.2" fill="#3a3a3a" font-weight="bold" text-anchor="middle" transform="translate(20.2,557.5) rotate(-90)">6</text>
<rect x="15.8" y="573.3100000000001" width="1.4" height="1.2" fill="#999" />
<line x1="13.5" y1="590.32" x2="19.5" y2="590.32" stroke="#999" stroke-width="1" />
<rect x="15.8" y="606.13" width="1.4" height="1.2" fill="#999" />
<text x="0" y="0" font-size="11.2" fill="#3a3a3a" font-weight="bold" text-anchor="middle" transform="translate(20.2,623.1) rotate(-90)">7</text>
<rect x="15.8" y="638.9499999999999" width="1.4" height="1.2" fill="#999" />
<line x1="13.5" y1="655.96" x2="19.5" y2="655.96" stroke="#999" stroke-width="1" />
<rect x="15.8" y="671.77" width="1.4" height="1.2" fill="#999" />
<text x="0" y="0" font-size="11.2" fill="#3a3a3a" font-weight="bold" text-anchor="middle" transform="translate(20.2,688.8) rotate(-90)">8</text>
<rect x="15.8" y="704.59" width="1.4" height="1.2" fill="#999" />
<line x1="13.5" y1="721.6000000000001" x2="19.5" y2="721.6000000000001" stroke="#999" stroke-width="1" />
<rect x="15.8" y="737.41" width="1.4" height="1.2" fill="#999" />
<text x="0" y="0" font-size="11.2" fill="#3a3a3a" font-weight="bold" text-anchor="middle" transform="translate(20.2,754.4) rotate(-90)">9</text>
<rect x="15.8" y="770.2299999999999" width="1.4" height="1.2" fill="#999" />
<line x1="13.5" y1="787.24" x2="19.5" y2="787.24" stroke="#999" stroke-width="1" />
<rect x="15.8" y="803.0500000000001" width="1.4" height="1.2" fill="#999" />
<text x="0" y="0" font-size="11.2" fill="#3a3a3a" font-weight="bold" text-anchor="middle" transform="translate(20.2,820.1) rotate(-90)">10</text>
<rect x="15.8" y="835.87" width="1.4" height="1.2" fill="#999" />
<line x1="13.5" y1="852.8800000000001" x2="19.5" y2="852.8800000000001" stroke="#999" stroke-width="1" />
<rect x="15.8" y="868.6899999999999" width="1.4" height="1.2" fill="#999" />
<rect x="1579" y="183" width="18" height="688" fill="#e8e8e8" />
<rect x="1579.5" y="186.5" width="17" height="17.5" fill="#fff" stroke="#8a8a8a" stroke-width="1"/>
<path d="M1584,198 L1588,193.5 L1592,198 Z" fill="#444" stroke="none" stroke-width="1" />
<rect x="1579.5" y="290.5" width="17" height="221.5" fill="#fff" stroke="#999" stroke-width="1"/>
<rect x="1579.5" y="850.5" width="17" height="17.5" fill="#fff" stroke="#8a8a8a" stroke-width="1"/>
<path d="M1584,857 L1592,857 L1588,861.5 Z" fill="#444" stroke="none" stroke-width="1" />
<rect x="0" y="871" width="1600" height="29" fill="#2b579a" />
<text x="10" y="890" font-size="13.5" fill="#fff" font-weight="600" textLength="84.0" lengthAdjust="spacingAndGlyphs" >STRONA 1 Z 1</text>
<text x="120" y="890" font-size="13.5" fill="#fff" font-weight="600" textLength="79.5" lengthAdjust="spacingAndGlyphs" >WYRAZY: 271</text>
<path d="M226,878 L226,892 L233,890 L240,892 L240,878 L233,880 Z" fill="none" stroke="#fff" stroke-width="1.3" />
<line x1="233" y1="880" x2="233" y2="890" stroke="#fff" stroke-width="1.1" />
<path d="M236,884 L238,887 L242,880" fill="none" stroke="#fff" stroke-width="1.4" />
<path d="M1237,877 L1244,878.5 L1252,877 L1252,890.5 L1244.5,891.5 L1237,890.5 Z" fill="none" stroke="#fff" stroke-width="1.5" />
<line x1="1244.5" y1="878.5" x2="1244.5" y2="891.5" stroke="#fff" stroke-width="1.2" />
<line x1="1239" y1="880.5" x2="1243" y2="880.5" stroke="#dde6f2" stroke-width="1" />
<line x1="1246" y1="880.5" x2="1250" y2="880.5" stroke="#dde6f2" stroke-width="1" />
<line x1="1239" y1="883" x2="1243" y2="883" stroke="#dde6f2" stroke-width="1" />
<line x1="1246" y1="883" x2="1250" y2="883" stroke="#dde6f2" stroke-width="1" />
<line x1="1239" y1="885.5" x2="1243" y2="885.5" stroke="#dde6f2" stroke-width="1" />
<line x1="1246" y1="885.5" x2="1250" y2="885.5" stroke="#dde6f2" stroke-width="1" />
<line x1="1239" y1="888" x2="1243" y2="888" stroke="#dde6f2" stroke-width="1" />
<line x1="1246" y1="888" x2="1250" y2="888" stroke="#dde6f2" stroke-width="1" />
<rect x="1268.7" y="871" width="46.3" height="29" fill="#204c8e" />
<rect x="1284.3" y="876.8" width="16" height="15" fill="none" stroke="#fff" stroke-width="1.5"/>
<line x1="1286.5" y1="879.8" x2="1298" y2="879.8" stroke="#dde6f2" stroke-width="1.1" />
<line x1="1286.5" y1="882.4" x2="1298" y2="882.4" stroke="#dde6f2" stroke-width="1.1" />
<line x1="1286.5" y1="885" x2="1298" y2="885" stroke="#dde6f2" stroke-width="1.1" />
<line x1="1286.5" y1="887.6" x2="1298" y2="887.6" stroke="#dde6f2" stroke-width="1.1" />
<line x1="1286.5" y1="890.2" x2="1298" y2="890.2" stroke="#dde6f2" stroke-width="1.1" />
<rect x="1331" y="876.8" width="15" height="14.5" fill="none" stroke="#fff" stroke-width="1.5"/>
<line x1="1333" y1="879.8" x2="1342" y2="879.8" stroke="#dde6f2" stroke-width="1.1" />
<line x1="1333" y1="882.4" x2="1342" y2="882.4" stroke="#dde6f2" stroke-width="1.1" />
<line x1="1333" y1="885" x2="1342" y2="885" stroke="#dde6f2" stroke-width="1.1" />
<line x1="1333" y1="887.6" x2="1342" y2="887.6" stroke="#dde6f2" stroke-width="1.1" />
<circle cx="1343.5" cy="887.5" r="5.3" fill="#fff"/>
<circle cx="1341.8" cy="886" r="1.6" fill="#2b579a"/>
<circle cx="1345.5" cy="889.3" r="1.6" fill="#2b579a"/>
<line x1="1369" y1="884.5" x2="1377" y2="884.5" stroke="#fff" stroke-width="2" />
<line x1="1382" y1="884.5" x2="1506" y2="884.5" stroke="#fff" stroke-width="1.2" />
<rect x="1447" y="877.5" width="5.5" height="13.5" fill="#fff" />
<line x1="1445" y1="881" x2="1445" y2="888" stroke="#fff" stroke-width="1" />
<line x1="1511" y1="884.5" x2="1521" y2="884.5" stroke="#fff" stroke-width="2" />
<line x1="1516" y1="879.5" x2="1516" y2="889.5" stroke="#fff" stroke-width="2" />
<text x="1540.5" y="890" font-size="13.5" fill="#fff" font-weight="600" textLength="33.0" lengthAdjust="spacingAndGlyphs" >140%</text>
<path d="M1443,754.7 L1446,754.7 Q1447.3,754.7 1447.3,756.5 Q1447.3,754.7 1448.6,754.7 L1451.7,754.7" fill="none" stroke="#111" stroke-width="1.7" />
<path d="M1443,773.3 L1446,773.3 Q1447.3,773.3 1447.3,771.5 Q1447.3,773.3 1448.6,773.3 L1451.7,773.3" fill="none" stroke="#111" stroke-width="1.7" />
<line x1="1447.3" y1="756" x2="1447.3" y2="772" stroke="#111" stroke-width="1.3" />
<line x1="1353.5" y1="546" x2="1353.5" y2="571" stroke="#222" stroke-width="1" />
<rect x="0" y="0" width="1600" height="1.2" fill="#26477e" />
<rect x="0" y="0" width="1.4" height="900" fill="#26477e" />
<rect x="1598" y="0" width="2" height="900" fill="#23457a" /></svg>
<div id="doc">
<div class="ln" style="left:392.0px;top:265.30px;word-spacing:2.266px">Nowa siedziba, którą Staś nazwał „Krakowem”, została urządzona w przeciągu trzech dni.</div>
<div class="ln" style="left:261.0px;top:294.61px;word-spacing:5.540px">Ale przedtem złożono w „męskim pokoju” główne pakunki — i w chwilach wielkiej ulewy młoda</div>
<div class="ln" style="left:261.0px;top:323.92px;word-spacing:1.161px">czwórka znajdowała w olbrzymim pniu jeszcze przed wykończeniem mieszkania doskonałe schronienie.</div>
<div class="ln" style="left:261.0px;top:353.23px;word-spacing:2.149px">Pora dżdżysta rozpoczęła się na dobre, ale nie były to nasze długie, jesienne deszcze, w czasie których</div>
<div class="ln" style="left:261.0px;top:382.54px;word-spacing:1.180px">niebo zawleka się ciemnymi chmurami i nudna, uciążliwa słota trwa przez całe tygodnie. Tu kilkanaście</div>
<div class="ln" style="left:261.0px;top:411.85px;word-spacing:3.620px">razy na dzień wiatr przepędzał po niebie wzdęte obłoki, które zlewały ziemię obficie, po czym znów</div>
<div class="ln" style="left:261.0px;top:441.16px;word-spacing:3.648px">rozbłyskiwało słońce, jasne, jakby świeżo wykąpane i zalewało złotym światłem skały, rzekę, drzewa</div>
<div class="ln" style="left:261.0px;top:470.47px;word-spacing:0.000px">i całą dżunglę.(…)</div>
<div class="ln" style="left:392.0px;top:499.78px;word-spacing:2.261px">Lecz gdy chmury pokrywały chwilami gwiaździste niebo i deszcz poczynał padać, czyniło</div>
<div class="ln" style="left:261.0px;top:529.09px;word-spacing:3.630px">się bardzo ciemno, a we wnętrzu baobabu tak czarno jak w piwnicy. Chcąc temu zaradzić Staś kazał</div>
<div class="ln" style="left:261.0px;top:558.40px;word-spacing:6.311px">natopić Mei tłuszczu z zabitych zwierząt i urządził z blaszanki lampę, którą zawiesił pod górnym</div>
<div class="ln" style="left:261.0px;top:587.71px;word-spacing:3.821px">otworem, zwanym przez dzieci oknem. Światło bijące z tego okna, widne z daleka wśród ciemności,</div>
<div class="ln" style="left:261.0px;top:617.02px;word-spacing:2.530px">odpędzało dzikie zwierzęta, ale natomiast przyciągało nietoperze, a nawet i ptaki, tak że w końcu Kali</div>
<div class="ln" style="left:261.0px;top:646.33px;word-spacing:0.000px">musiał urządzić w otworze rodzaj zasłony z cierni, podobnej do tej, którą zamykał na noc otwór dolny.</div>
<div class="ln" style="left:392.0px;top:675.64px;word-spacing:4.816px">Jednakże w dzień, w chwilach pogody, dzieci opuszczały „Kraków” i krążyły po całym</div>
<div class="ln" style="left:261.0px;top:704.95px;word-spacing:1.607px">cyplu. Staś wyprawiał się na antylopy-ariele i na strusie, których liczne stada pojawiły się w dole rzeki,</div>
<div class="ln" style="left:261.0px;top:734.26px;word-spacing:-0.148px">a Nel chodziła do swego słonia, który z początku trąbił tylko o żywność, a potem zaczął trąbić i wówczas,</div>
<div class="ln" style="left:261.0px;top:763.57px;word-spacing:8.407px">gdy mu się nudziło bez małej przyjaciółki. Witał też ją zawsze z wyraźną radością i nastawiał</div>
<div class="ln" style="left:261.0px;top:792.88px;word-spacing:0.000px">natychmiast swoje olbrzymie uszy, jak tylko usłyszał z daleka jej głos lub kroki.</div>
</div>
</body></html>
